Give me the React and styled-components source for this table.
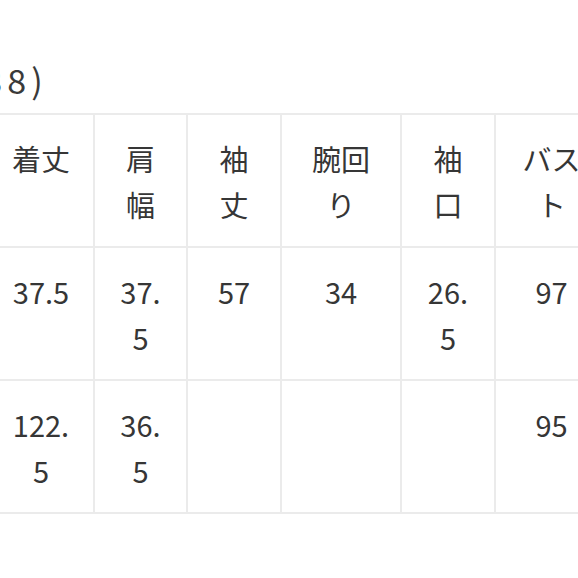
import React from "react";
import styled, { createGlobalStyle } from "styled-components";

const GlobalStyle = createGlobalStyle`
  html, body {
    margin: 0;
    padding: 0;
    background: #ffffff;
    overflow: hidden;
  }
  body {
    font-family: "Noto Sans CJK JP", "Noto Sans", sans-serif;
    color: #333333;
  }
`;

const columns = [106, 93, 94, 120, 94, 113];

const headers = ["着丈", "肩幅", "袖丈", "腕回り", "袖口", "バスト"];

const rows = [
    ["37.5", "37.5", "57", "34", "26.5", "97"],
    ["122.5", "36.5", "", "", "", "95"],
];

const SizeChart = () => {
    return (
        <Page>
            <Title>(38)</Title>
            <Table>
                <colgroup>
                    {columns.map((w, i) => (
                        <col key={i} style={{ width: w }} />
                    ))}
                </colgroup>
                <thead>
                    <tr>
                        {headers.map((h) => (
                            <Cell as="th" key={h}>
                                {h}
                            </Cell>
                        ))}
                    </tr>
                </thead>
                <tbody>
                    {rows.map((row, r) => (
                        <tr key={r}>
                            {row.map((v, c) => (
                                <Cell key={c}>{v}</Cell>
                            ))}
                        </tr>
                    ))}
                </tbody>
            </Table>
        </Page>
    );
};

export default function App() {
    return (
        <>
            <GlobalStyle />
            <SizeChart />
        </>
    );
}

const Page = styled.div`
    width: 578px;
    height: 578px;
    overflow: hidden;
    padding-top: 56px;
    box-sizing: border-box;
`;

const Title = styled.div`
    margin-left: -33px;
    font-size: 34px;
    line-height: 48px;
    height: 48px;
    margin-bottom: 9px;
    font-weight: 400;
    letter-spacing: 5px;
    color: #3a3a3a;
    white-space: nowrap;
`;

const Table = styled.table`
    margin-left: -13px;
    width: 620px;
    table-layout: fixed;
    border-collapse: collapse;
`;

const Cell = styled.td`
    border: 2px solid #ebebeb;
    padding: 19.5px 18px;
    font-size: 29px;
    line-height: 46px;
    font-weight: 400;
    text-align: center;
    vertical-align: top;
    color: #363636;
    word-break: break-all;
    overflow-wrap: anywhere;
`;
